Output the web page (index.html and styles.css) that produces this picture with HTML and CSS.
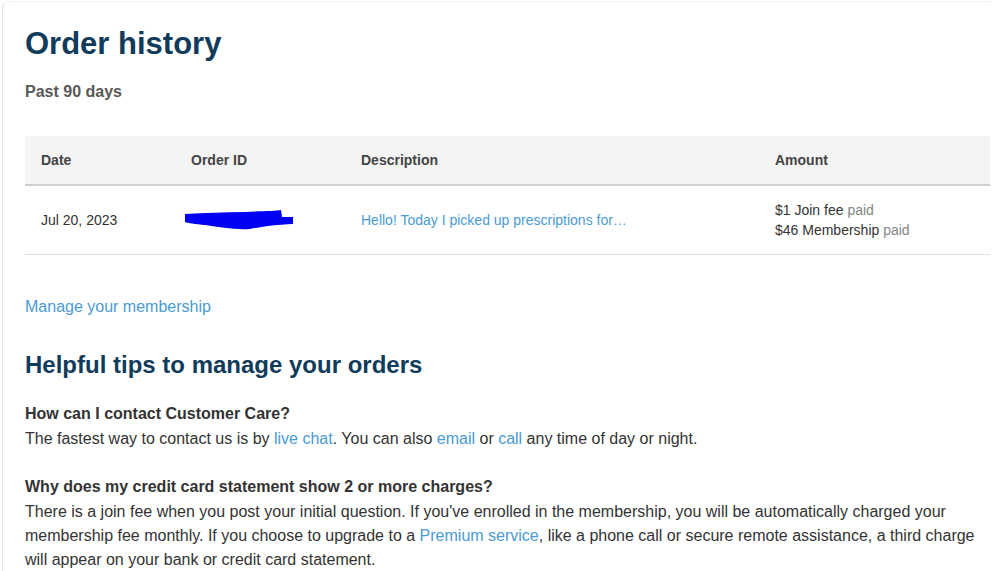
FILE: index.html
```html
<!DOCTYPE html>
<html lang="en">
<head>
<meta charset="utf-8">
<title>Order history</title>
<link rel="stylesheet" href="styles.css">
</head>
<body>
<main class="card">
  <h1 class="title">Order history</h1>
  <p class="period">Past 90 days</p>

  <table class="orders">
    <thead>
      <tr>
        <th class="col-date">Date</th>
        <th class="col-id">Order ID</th>
        <th class="col-desc">Description</th>
        <th class="col-amount">Amount</th>
      </tr>
    </thead>
    <tbody>
      <tr>
        <td>Jul 20, 2023</td>
        <td>
          <span class="redacted">
            <svg width="110" height="22" viewBox="0 0 110 22" aria-hidden="true">
              <path d="M0 5 C20 4 40 3 60 3 C80 2 90 2 96 1 L97 8 L108 8 L108 15 C90 16 80 17 65 20 C50 21 35 18 20 16 C10 15 3 14 0 13 Z" fill="#0000f5"/>
            </svg>
          </span>
        </td>
        <td><a class="link" href="#">Hello! Today I picked up prescriptions for…</a></td>
        <td>
          <div>$1 Join fee <span class="muted">paid</span></div>
          <div>$46 Membership <span class="muted">paid</span></div>
        </td>
      </tr>
    </tbody>
  </table>

  <a class="link manage" href="#">Manage your membership</a>

  <h2 class="subtitle">Helpful tips to manage your orders</h2>

  <section class="faq">
    <h3 class="question">How can I contact Customer Care?</h3>
    <p class="answer">The fastest way to contact us is by <a class="link" href="#">live chat</a>. You can also <a class="link" href="#">email</a> or <a class="link" href="#">call</a> any time of day or night.</p>
  </section>

  <section class="faq">
    <h3 class="question">Why does my credit card statement show 2 or more charges?</h3>
    <p class="answer">There is a join fee when you post your initial question. If you've enrolled in the membership, you will be automatically charged your membership fee monthly. If you choose to upgrade to a <a class="link" href="#">Premium service</a>, like a phone call or secure remote assistance, a third charge will appear on your bank or credit card statement.</p>
  </section>
</main>
</body>
</html>
```

FILE: styles.css
```css
html, body {
  margin: 0;
  padding: 0;
  background: #ffffff;
  font-family: "Liberation Sans", Arial, sans-serif;
  color: #333333;
  overflow: hidden;
}

.card {
  margin: 1px 0 0 2px;
  border-left: 1px solid #e4e4e4;
  border-top: 1px solid #f2f2f2;
  border-top-left-radius: 8px;
  padding: 24px 0 0 22px;
  width: 965px;
}

.title {
  margin: 0;
  font-size: 31px;
  line-height: 36px;
  font-weight: bold;
  color: #103b5b;
}

.period {
  margin: 20px 0 0;
  font-size: 16px;
  line-height: 20px;
  font-weight: bold;
  color: #585858;
}

.orders {
  margin-top: 34px;
  width: 965px;
  border-collapse: collapse;
  font-size: 14px;
  line-height: 20px;
}

.orders th {
  background: #f4f4f4;
  height: 49px;
  padding: 0 0 1px 16px;
  text-align: left;
  font-weight: bold;
  color: #444444;
  border-bottom: 2px solid #cfcfcf;
  box-sizing: border-box;
}

.col-date { width: 150px; }
.col-id { width: 170px; }
.col-desc { width: 414px; }

.orders td {
  padding: 14px 0 14px 16px;
  vertical-align: middle;
  color: #333333;
  border-bottom: 1px solid #dedede;
}

.redacted {
  display: inline-block;
  vertical-align: middle;
  margin-left: -6px;
  line-height: 0;
}

.link {
  color: #4a9bd4;
  text-decoration: none;
}

.muted {
  color: #858585;
}

.manage {
  display: block;
  margin-top: 42px;
  font-size: 16px;
  line-height: 20px;
}

.subtitle {
  margin: 33px 0 0;
  font-size: 24px;
  line-height: 30px;
  font-weight: bold;
  color: #103b5b;
}

.faq {
  margin-top: 22px;
}

.faq + .faq {
  margin-top: 24px;
}

.question {
  margin: 0 0 1px;
  font-size: 16px;
  line-height: 24px;
  font-weight: bold;
  color: #333333;
}

.answer {
  margin: 0;
  font-size: 16px;
  line-height: 24px;
  color: #333333;
  width: 958px;
}
```
